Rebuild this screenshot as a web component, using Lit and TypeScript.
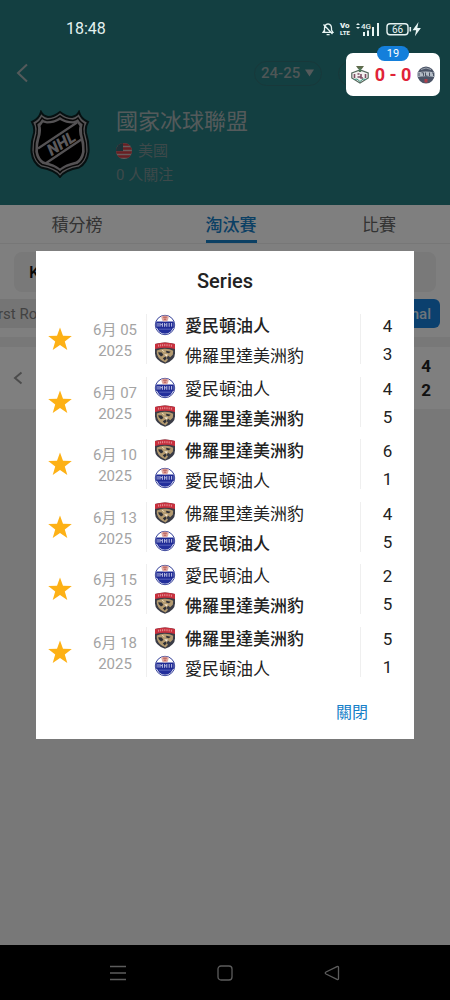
import { LitElement, html, css, svg } from "lit";
import { customElement, property, state } from "lit/decorators.js";
import { classMap } from "lit/directives/class-map.js";

type Team = "oilers" | "panthers";
interface Game {
  day: string;
  year: string;
  teams: [Team, Team];
  goals: [number, number];
}

const NAMES: Record<Team, string> = {
  oilers: "愛民頓油人",
  panthers: "佛羅里達美洲豹",
};

const GAMES: Game[] = [
  { day: "6月 05", year: "2025", teams: ["oilers", "panthers"], goals: [4, 3] },
  { day: "6月 07", year: "2025", teams: ["oilers", "panthers"], goals: [4, 5] },
  { day: "6月 10", year: "2025", teams: ["panthers", "oilers"], goals: [6, 1] },
  { day: "6月 13", year: "2025", teams: ["panthers", "oilers"], goals: [4, 5] },
  { day: "6月 15", year: "2025", teams: ["oilers", "panthers"], goals: [2, 5] },
  { day: "6月 18", year: "2025", teams: ["panthers", "oilers"], goals: [5, 1] },
];

@customElement("team-logo")
export class TeamLogo extends LitElement {
  @property() team: Team = "oilers";

  static styles = css`
    :host { display: block; width: 22px; height: 22px; }
    svg { display: block; width: 100%; height: 100%; }
  `;

  render() {
    const oilers = svg`
      <circle cx="11" cy="11" r="9.700" fill="#fff" stroke="#3a459b" stroke-width="1"/>
      <path d="M2.600 12.500h16.800a8.500 8.500 0 0 1-16.800 0z" fill="#232f9c"/>
      <path d="M2.200 7.500h17.600v6.500H2.200z" fill="#1f2a94"/>
      <path d="M4 9v3.600M6 9v3.600M8.400 9v3.800M10.600 12.800V9M12.800 9v3.800M15.200 9v3.800M17.600 9v3.600" fill="none" stroke="#e4e6f8" stroke-width=".8"/>
      <path d="M6.500 10.600h1.500M10.800 10.800h1.500" stroke="#e4e6f8" stroke-width=".7"/>
      <path d="M5 15.200h12" stroke="#7a85cc" stroke-width=".6"/>
      <path d="M7.200 2.400q3.800-1.800 7.600 0l-1 4q-2.800 2-5.600 0z" fill="#e0a8a0"/>
      <path d="M9.200 3.200h3.600M9.800 5.200h2.400" stroke="#b3524e" stroke-width="1"/>`;
    const panthers = svg`
      <path d="M1 2Q6 .4 11 .4t10 1.600v9.200q0 7.200-10 10.600Q1 18.400 1 11.200z" fill="#3a3c46"/>
      <path d="M1 2Q6 .4 11 .4t10 1.600v5Q11 4.600 1 7z" fill="#c8303e"/>
      <path d="M4.600 2.700v2M6.600 2.400v2M8.600 2.200v2M10.800 2.100v2M13 2.200v2M15.200 2.400v2M17.400 2.700v2" stroke="#eca9ab" stroke-width=".8" fill="none"/>
      <path d="M2.800 8.600Q7 6.600 11 6.800q5 0 8.200 2l-.4 4-2.600 2.400-2-1.400-1.600 2 1.400 2-2.400 2.600-3.800-2Q3.400 15.600 2.800 11z" fill="#b39a70"/>
      <path d="M4.200 10.200l3.600.4 1.600 2.400L7 14.600 4.800 12.200zM12.200 8.800l4.600 1-2 1.400-2.600-.6zM8.800 16.200l2.800-1.600 1 1.800-2 2z" fill="#2c2e36"/>
      <path d="M10.200 12.200l3.800.4-1.600 2z" fill="#f4e9d8"/>
      <path d="M8 8.200l2.400 1.600" stroke="#ead9b3" stroke-width="1"/>`;
    return html`<svg viewBox="0 0 22 22" role="img" aria-label=${NAMES[this.team]}>
      ${this.team === "oilers" ? oilers : panthers}
    </svg>`;
  }
}

@customElement("status-bar")
export class StatusBar extends LitElement {
  static styles = css`
    :host { display: flex; align-items: center; justify-content: space-between; height: 58px; padding: 0 28px 0 66px; box-sizing: border-box; color: #e4f2f0; }
    .time { font: 400 16px/20px Roboto, sans-serif; }
    svg { display: block; }
  `;

  render() {
    return html`
      <span class="time">18:48</span>
      <svg width="100" height="16" viewBox="0 0 100 16" fill="none" stroke="#e8f4f3" stroke-width="1.400">
        <path d="M2.500 10.800V7q0-3.500 3.500-4.200Q9.500 3.500 9.500 7v2l1.400 2.300H1L2.500 9M4.600 13.600h3M1.500 3.500l9 9.500" stroke-width="1.300"/>
        <g fill="#e8f4f3" stroke="none" font-family="Roboto, sans-serif" font-weight="900">
          <text x="18" y="7" font-size="8">Vo</text>
          <text x="18" y="14" font-size="6">LTE</text>
          <text x="39" y="8" font-size="8" font-weight="500">4G</text>
        </g>
        <path d="M34 4l2-2 2 2zM34 6l2 2 2-2z" fill="#e8f4f3" stroke="none"/>
        <path d="M42 11v4M46 9.500v5.500M51 6v9M56 2v13" stroke-width="2"/>
        <rect x="65" y="2.700" width="21" height="11" rx="3"/>
        <path d="M88.300 6v4.500" stroke-width="1.600"/>
        <text x="75.500" y="11.800" text-anchor="middle" fill="#e8f4f3" stroke="none" font-family="Roboto, sans-serif" font-size="10">66</text>
        <path d="M96.500 1l-6 8.200h3.600l-1.200 6 6-8.200h-3.600z" fill="#e8f4f3" stroke="none"/>
      </svg>`;
  }
}

@customElement("league-header")
export class LeagueHeader extends LitElement {
  static styles = css`
    :host { display: block; color: #d0d8d8; font-family: Roboto, "Noto Sans CJK TC", sans-serif; }
    button { padding: 0; border: 0; background: none; color: inherit; }
    svg { display: block; }
    .bar { display: flex; align-items: center; height: 30px; padding: 0 0 0 16px; }
    .spacer { flex: 1; }
    .season { display: flex; align-items: center; gap: 4px; height: 25px; box-sizing: border-box; padding: 0 7px 0 6px; border: 1px solid #307175; border-radius: 13px; }
    .season select { appearance: none; border: 0; padding: 0; margin: 0; background: none; color: #9cacad; font: 500 15px/20px Roboto, sans-serif; }
    .follow { width: 96px; height: 25px; margin: 0 16px; border: 1px solid #307175; border-radius: 13px; }
    .info { display: flex; padding: 17px 16px 18px 30px; gap: 26px; }
    .text { display: flex; flex-direction: column; }
    h1 { margin: 0; font-size: 22px; line-height: 34px; font-weight: 400; color: #a9b5b6; }
    p { margin: 0; display: flex; align-items: center; gap: 6px; font-size: 15px; line-height: 24px; color: #7b9395; }
    .shield { margin-top: 5px; }
  `;

  render() {
    return html`
      <div class="bar">
        <button aria-label="返回">
          <svg width="14" height="20" viewBox="0 0 14 20" fill="none" stroke="#a9b5b6" stroke-width="2"><path d="M11 1.500L2 10l9 8.500"/></svg>
        </button>
        <span class="spacer"></span>
        <label class="season">
          <select aria-label="賽季"><option>24-25</option></select>
          <svg width="9" height="8" viewBox="0 0 9 8" fill="#a9b5b6"><path d="M0 .5h9L4.500 7.500z"/></svg>
        </label>
        <button class="follow" aria-label="關注"></button>
      </div>
      <div class="info">
        <svg class="shield" width="60" height="68" viewBox="0 0 60 68">
          <path d="M30 2Q24 7 18 7 13 6 11 2 9 9 2 12 5 17 4 23 1 32 1.500 42 3 53 11 57.500 25 60 30 67 35 60 49 57.500 57 53 58.500 42 59 32 56 23 55 17 58 12 51 9 49 2 47 6 42 7 36 7 30 2z" fill="#a8a4a8" stroke="#0c2022" stroke-width="2"/>
          <path d="M30 6Q24 10.500 17 10.500 14 10 12 8 10 12 6.500 14 8 18 7 24 4 33 4.500 42 6 51 12 54.500 26 57.500 30 62.500 34 57.500 48 54.500 54 51 55.500 42 56 33 53 24 52 18 53.500 14 50 12 48 8 46 10 43 10.500 36 10.500 30 6z" fill="#a8a4a8" stroke="#111" stroke-width="1.600"/>
          <path d="M30 10Q24 13.500 17 13.500L13 12.500 10.500 16Q11.500 19 10.500 25 7.500 34 8 42 9.500 49 14 51.500 25 54 30 58.500 35 54 46 51.500 50.500 49 52 42 52.500 34 49.500 25 48.500 19 49.500 16L47 12.500 43 13.500Q36 13.500 30 10z" fill="#000"/>
          <path d="M8 38.500L47 12.500M15.500 53.500L52 29" stroke="#a8a4a8" stroke-width="2.200"/>
          <text x="31" y="39" text-anchor="middle" transform="rotate(-33 31 33)" font-family="Roboto, sans-serif" font-size="16" font-weight="900" font-style="italic" fill="#b6b2b6">NHL</text>
        </svg>
        <div class="text">
          <h1>國家冰球聯盟</h1>
          <p>
            <svg width="16" height="16" viewBox="0 0 16 16">
              <defs><clipPath id="disc"><circle cx="8" cy="8" r="8"/></clipPath></defs>
              <g clip-path="url(#disc)">
                <path d="M0 0h16v16H0z" fill="#d0b6b6"/>
                <path d="M0 1.500h16M0 5.500h16M0 9.500h16M0 13.500h16" stroke="#d03e46" stroke-width="2.400"/>
                <path d="M0 0h7v8H0z" fill="#3b6470"/>
              </g>
            </svg>
            <span>美國</span>
          </p>
          <p>0 人關注</p>
        </div>
      </div>`;
  }
}

@customElement("series-dialog")
export class SeriesDialog extends LitElement {
  static styles = css`
    :host { display: block; background: #fff; color: #222; font-family: Roboto, "Noto Sans CJK TC", sans-serif; }
    h2 { margin: 0; padding: 15px 0 13px; font: 500 20px/30px Roboto, sans-serif; text-align: center; }
    ul { margin: 0; padding: 0; list-style: none; display: grid; grid-auto-rows: 1fr; min-height: 375px; }
    li { display: flex; align-items: flex-start; padding-left: 11px; }
    svg { display: block; }
    .star { margin-top: 17px; }
    time { width: 73px; padding: 11px 0 0 11px; box-sizing: border-box; text-align: center; font-size: 15px; line-height: 21px; color: #a4a4a4; }
    .rule { width: 1px; height: 50px; margin-top: 5px; background: #efefef; flex: none; }
    .logos { display: grid; gap: 6px; padding: 5px 9px 0 7px; }
    .names { flex: 1; min-width: 0; padding-top: 2px; font-size: 17px; line-height: 30px; }
    .scores { width: 53px; padding-top: 3px; font-size: 17px; line-height: 28px; text-align: center; }
    .names div { white-space: nowrap; }
    .winner { font-weight: 500; }
    .actions { display: flex; justify-content: flex-end; padding: 17px 46px 14px 0; }
    .close { border: 0; padding: 0; background: none; color: #1680c8; font: 400 16px/24px Roboto, "Noto Sans CJK TC", sans-serif; cursor: pointer; }
  `;

  private dismiss() {
    this.dispatchEvent(new CustomEvent("dismiss"));
  }

  render() {
    return html`
      <h2>Series</h2>
      <ul>
        ${GAMES.map((game) => {
          const winner = game.goals[0] > game.goals[1] ? 0 : 1;
          return html`<li>
            <svg class="star" width="26" height="26" viewBox="0 0 26 26" fill="#fdb116"><path d="M13 1.500l3 8.200 8.800.3-7 5.400 2.500 8.600L13 19l-7.300 5 2.500-8.600-7-5.400 8.800-.3z"/></svg>
            <time><span>${game.day}</span><br>${game.year}</time>
            <span class="rule"></span>
            <div class="logos">${game.teams.map((t) => html`<team-logo .team=${t}></team-logo>`)}</div>
            <div class="names">
              ${game.teams.map((t, i) => html`<div class=${classMap({ winner: i === winner })}>${NAMES[t]}</div>`)}
            </div>
            <span class="rule"></span>
            <div class="scores">${game.goals.map((g) => html`<div>${g}</div>`)}</div>
          </li>`;
        })}
      </ul>
      <div class="actions"><button class="close" @click=${this.dismiss}>關閉</button></div>`;
  }
}

@customElement("live-score")
export class LiveScore extends LitElement {
  static styles = css`
    :host { display: flex; flex-direction: column; align-items: center; font-family: Roboto, sans-serif; }
    .badge { z-index: 1; width: 32px; margin-bottom: -8px; border-radius: 8px; background: #147fdb; color: #fff; font-size: 11px; line-height: 15px; text-align: center; }
    .card { display: flex; align-items: center; justify-content: space-between; width: 94px; height: 43px; padding: 0 5px; box-sizing: border-box; border-radius: 7px; background: #fff; color: #e02338; font-size: 18px; font-weight: 700; }
    svg { display: block; }
  `;

  render() {
    return html`
      <span class="badge">19</span>
      <div class="card">
        <svg width="18" height="19" viewBox="0 0 18 19">
          <path d="M.8 8L9 5l8.200 3v5L9 18 .8 13z" fill="#f3f1f0" stroke="#54685c" stroke-width="1.200"/>
          <path d="M5 1h8L10.800 4H7.200z" fill="#5f6b4c"/><path d="M9 3v4" stroke="#4f7a5a" stroke-width="2.400"/>
          <path d="M3.500 9v4M6.500 9h2M6.500 12h3M10 9v4h2M14.500 9v4" stroke="#7c4f63" stroke-width="1.600" fill="none"/>
          <path d="M3 14.500l3-.5 3 2.500 3-2.500 3 .5" stroke="#35917c" fill="none"/>
        </svg>
        <span>0 - 0</span>
        <svg width="18" height="18" viewBox="0 0 18 18">
          <circle cx="9" cy="9" r="8.600" fill="#4b5467"/>
          <path d="M.2 6.500Q9 4.500 17.800 6.500v4.500Q9 9.500 .2 11z" fill="#b4bcc6"/>
          <path d="M2 7v3M4.500 6.800h2v3M8.500 6.500v3.500h2M12.500 6.500v3.500M15 7h1.500v3" stroke="#4a5364" fill="none"/>
          <path d="M4 3.500Q9 .5 14 3.500" stroke="#9aa2ac" fill="none"/><path d="M7.500 13h3v3.500h-3z" fill="#b33e4a"/>
        </svg>
      </div>`;
  }
}

@customElement("app-root")
export class AppRoot extends LitElement {
  @state() private open = true;
  @state() private tab = 1;

  static styles = css`
    :host { display: flex; flex-direction: column; position: relative; min-height: 100vh; overflow: hidden; background: #f0f0f0; font-family: Roboto, "Noto Sans CJK TC", sans-serif; }
    button { border: 0; padding: 0; background: none; font: inherit; color: inherit; }
    svg { display: block; }
    .top { background: #267e82; }
    .status { position: relative; z-index: 2; }
    .tabs { display: grid; grid-template-columns: 154px 1fr 142px; background: #fff; border-bottom: 1px solid #eee; }
    .tabs button { justify-self: center; height: 38px; box-sizing: border-box; padding-top: 5px; border-bottom: 3px solid transparent; font-size: 17px; line-height: 30px; color: #666; }
    .tabs .active { border-color: #1680c8; color: #1680c8; font-weight: 500; }
    .filters { background: #fff; padding: 8px 14px 9px; }
    .stage { display: block; width: 100%; height: 40px; padding: 0 15px; border: 0; border-radius: 8px; background: #f2f2f2; appearance: none; color: #111; font: 500 17px/24px Roboto, sans-serif; }
    .rounds { display: flex; justify-content: space-between; margin: 7px -4px 0 -36px; }
    .rounds button { height: 29px; border-radius: 6px; background: #eaeaea; color: #858585; font-size: 15px; padding: 0 8px; }
    .rounds .current { padding: 0 9px 0 24px; background: #1680dd; color: #dce9f5; font-weight: 500; }
    .match { display: flex; align-items: center; justify-content: space-between; margin-top: 10px; height: 62px; box-sizing: border-box; padding: 0 19px 0 13px; background: #fff; }
    .total { font-size: 17px; font-weight: 700; line-height: 24px; color: #222; }
    .fill { flex: 1; }
    .scrim { position: absolute; inset: 0; z-index: 1; display: flex; align-items: flex-start; padding: 251px 36px 0; background: rgba(0, 0, 0, 0.5); }
    .scrim series-dialog { flex: 1; }
    .live { position: absolute; z-index: 3; top: 46px; right: 10px; }
    .nav { position: relative; z-index: 2; display: flex; justify-content: space-around; align-items: center; height: 55px; padding: 0 64px; background: #000; }
  `;

  render() {
    return html`
      <header class="top">
        <status-bar class="status"></status-bar>
        <league-header></league-header>
      </header>
      <nav class="tabs">
        ${["積分榜", "淘汰賽", "比賽"].map(
          (name, i) => html`<button class=${classMap({ active: i === this.tab })} @click=${() => (this.tab = i)}>${name}</button>`,
        )}
      </nav>
      <section class="filters">
        <select class="stage" aria-label="階段"><option>K</option></select>
        <div class="rounds"><button>First Round</button><button class="current">Final</button></div>
      </section>
      <section class="match">
        <button aria-label="上一頁">
          <svg width="10" height="14" viewBox="0 0 10 14" fill="none" stroke="#999" stroke-width="2"><path d="M8.500 1.500L2 7l6.500 5.500"/></svg>
        </button>
        <div class="total"><div>4</div><div>2</div></div>
      </section>
      <div class="fill"></div>
      ${this.open
        ? html`<div class="scrim"><series-dialog role="dialog" aria-label="Series" @dismiss=${() => (this.open = false)}></series-dialog></div>`
        : null}
      <live-score class="live"></live-score>
      <footer class="nav">
        <button aria-label="選單"><svg width="16" height="16" viewBox="0 0 16 16" stroke="#5c5c5c" stroke-width="1.300"><path d="M0 1.500h16M0 8h16M0 14.500h16"/></svg></button>
        <button aria-label="主畫面"><svg width="16" height="16" viewBox="0 0 16 16" fill="none" stroke="#5c5c5c" stroke-width="1.300"><rect x="1" y="1" width="14" height="14" rx="3"/></svg></button>
        <button aria-label="返回"><svg width="16" height="16" viewBox="0 0 16 16" fill="none" stroke="#5c5c5c" stroke-width="1.300"><path d="M14.500 2.500v11q0 1.500-1.500.8L2 9q-1.500-1 0-2L13 1.700q1.500-.7 1.500.8z"/></svg></button>
      </footer>`;
  }
}
